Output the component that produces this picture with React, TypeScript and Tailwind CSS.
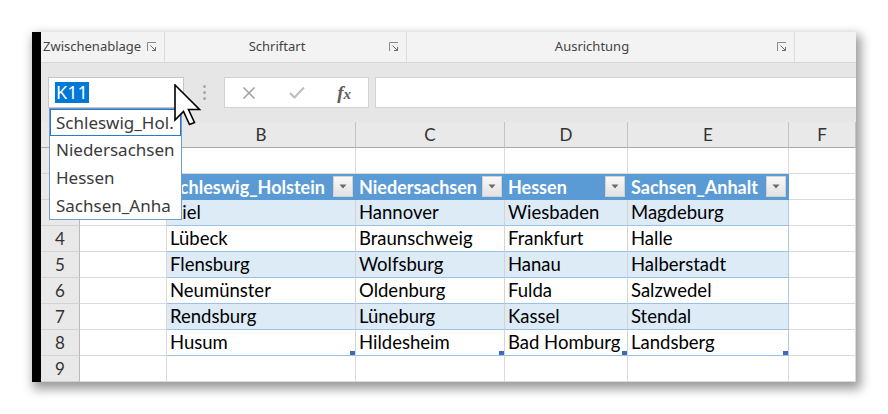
import React from "react";

const cols = ["A", "B", "C", "D", "E", "F"];

const tableHead = ["Schleswig_Holstein", "Niedersachsen", "Hessen", "Sachsen_Anhalt"];

const tableRows = [
  ["Kiel", "Hannover", "Wiesbaden", "Magdeburg"],
  ["Lübeck", "Braunschweig", "Frankfurt", "Halle"],
  ["Flensburg", "Wolfsburg", "Hanau", "Halberstadt"],
  ["Neumünster", "Oldenburg", "Fulda", "Salzwedel"],
  ["Rendsburg", "Lüneburg", "Kassel", "Stendal"],
  ["Husum", "Hildesheim", "Bad Homburg", "Landsberg"],
];

const listItems = ["Schleswig_Hol.", "Niedersachsen", "Hessen", "Sachsen_Anha"];

function Launcher() {
  return (
    <svg width="10" height="10" viewBox="0 0 10 10" className="shrink-0">
      <path d="M0.5 9 V0.5 H9" fill="none" stroke="#8a8a8a" strokeWidth="1" />
      <path d="M3.5 3.5 L8.5 8.5 M8.5 5 V8.5 H5" fill="none" stroke="#6a6a6a" strokeWidth="1" />
    </svg>
  );
}

function FilterButton() {
  return (
    <div className="absolute right-[2px] top-[2px] w-[20px] h-[21px] flex items-center justify-center bg-gradient-to-b from-[#f8f8f8] to-[#e2e2e2] border border-[#d2d2d2]">
      <svg width="8" height="5" viewBox="0 0 8 5">
        <path d="M0.5 0.5 H7.5 L4 4.5 Z" fill="#6b6b6b" />
      </svg>
    </div>
  );
}

function Cell({ row, col }: { row: number; col: number }) {
  const inTable = row >= 2 && row <= 8 && col >= 2 && col <= 5;

  if (col === 0) {
    return (
      <div className="h-[26px] flex items-center justify-center bg-[#e9e9e9] border-r border-b border-r-[#b9b9b9] border-b-[#d2d2d2] text-[17px] text-[#333]">
        {row}
      </div>
    );
  }

  if (!inTable) {
    return <div className="h-[26px] bg-white border-r border-b border-[#dadada]" />;
  }

  const idx = col - 2;

  if (row === 2) {
    return (
      <div className="relative h-[26px] flex items-center pl-[3px] bg-[#5b9bd5] border-r border-r-[#5b9bd5] text-white font-bold text-[18px] overflow-hidden whitespace-nowrap">
        {tableHead[idx]}
        <FilterButton />
      </div>
    );
  }

  const shaded = row % 2 === 1;
  const edge = col === 5;
  return (
    <div
      className={
        "relative h-[26px] flex items-center pl-[3px] border-r border-b border-b-[#9bc2e6] text-[18.5px] text-black overflow-hidden whitespace-nowrap " +
        (shaded ? "bg-[#ddebf7] " : "bg-white ") +
        (edge ? "border-r-[#b4c9e0]" : "border-r-[#d4d4d4]")
      }
    >
      {tableRows[row - 3][idx]}
      {row === 8 && <div className="absolute right-0 bottom-0 w-[5px] h-[4px] bg-[#4169b8]" />}
    </div>
  );
}

export default function App() {
  return (
    <div className="relative w-[888px] h-[414px] bg-white overflow-hidden pt-[32px] pl-[32px] font-['Lato',sans-serif]">
      {/* window */}
      <div className="flex w-[824px] h-[350px] shadow-[3px_5px_10px_2px_rgba(0,0,0,0.4)]">
        <div className="w-[9px] bg-black shrink-0" />
        <div className="flex-1 flex flex-col overflow-hidden">
          {/* ribbon group captions */}
          <div className="flex h-[31px] bg-[#f3f3f3] border-b border-[#d6d6d6] text-[13px] text-[#444] font-['Noto_Sans',sans-serif]">
            <div className="w-[124px] flex items-center border-r border-[#dcdcdc] pl-[2px] pr-[7px]">
              <span className="flex-1">Zwischenablage</span>
              <Launcher />
            </div>
            <div className="w-[242px] flex items-center border-r border-[#dcdcdc] pr-[7px]">
              <span className="flex-1 text-center">Schriftart</span>
              <Launcher />
            </div>
            <div className="w-[388px] flex items-center border-r border-[#dcdcdc] pr-[7px]">
              <span className="flex-1 text-center">Ausrichtung</span>
              <Launcher />
            </div>
            <div className="flex-1" />
          </div>

          {/* name box + formula bar */}
          <div className="flex h-[59px] pt-[14px] pl-[7px] bg-[#e6e6e6] font-['Noto_Sans',sans-serif]">
            <div className="w-[136px] h-[31px] bg-white border border-[#c6c6c6] flex items-center pl-[6px]">
              <span className="bg-[#0078d7] text-white text-[18px] leading-[21px] px-[1px]">K11</span>
            </div>
            <div className="w-[40px] h-[31px] flex flex-col items-center justify-center gap-[3px]">
              <div className="w-[3px] h-[3px] rounded-full bg-[#a8a8a8]" />
              <div className="w-[3px] h-[3px] rounded-full bg-[#a8a8a8]" />
              <div className="w-[3px] h-[3px] rounded-full bg-[#a8a8a8]" />
            </div>
            <div className="w-[145px] h-[31px] bg-white border border-[#d2d2d2] flex items-center">
              <div className="w-[48px] flex justify-center">
                <svg width="14" height="14" viewBox="0 0 14 14">
                  <path d="M1.5 1.5 L12.5 12.5 M12.5 1.5 L1.5 12.5" stroke="#a3a3a3" strokeWidth="1.6" />
                </svg>
              </div>
              <div className="w-[48px] flex justify-center">
                <svg width="16" height="13" viewBox="0 0 16 13">
                  <path d="M1 7 L5.5 11.5 L15 1.5" fill="none" stroke="#bdbdbd" strokeWidth="2" />
                </svg>
              </div>
              <div className="w-[48px] flex justify-center">
                <span className="font-['Liberation_Serif',serif] italic font-bold text-[19px] text-[#5e5e5e] leading-none">
                  f<span className="text-[15px]">x</span>
                </span>
              </div>
            </div>
            <div className="flex-1 h-[31px] ml-[6px] bg-white border-y border-l border-[#d2d2d2]" />
          </div>

          {/* sheet */}
          <div className="grid grid-cols-[39px_87px_189px_149px_123px_161px_1fr]">
            <div className="h-[26px] bg-[#e9e9e9] border-r border-b border-r-[#c4c4c4] border-b-[#a9a9a9]" />
            {cols.map((c) => (
              <div
                key={c}
                className="h-[26px] flex items-center justify-center bg-[#e9e9e9] border-r border-b border-r-[#c4c4c4] border-b-[#a9a9a9] text-[17px] text-[#333]"
              >
                {c}
              </div>
            ))}
            {[1, 2, 3, 4, 5, 6, 7, 8, 9].map((r) =>
              [0, 1, 2, 3, 4, 5, 6].map((c) => <Cell key={r + "-" + c} row={r} col={c} />)
            )}
          </div>
        </div>
      </div>

      {/* name box drop-down list */}
      <div className="absolute left-[49px] top-[108px] w-[133px] h-[112px] bg-white border border-[#6f9ccc] font-['Noto_Sans',sans-serif] text-[17px] text-[#3a3a3a]">
        {listItems.map((item, i) => (
          <div
            key={item}
            className={
              "flex items-center pl-[5px] whitespace-nowrap overflow-hidden " +
              (i === 0 ? "h-[27px] border border-[#2a79c8]" : "h-[28px] pl-[6px]")
            }
          >
            {item}
          </div>
        ))}
      </div>

      {/* mouse pointer */}
      <svg className="absolute left-[174px] top-[84px]" width="28" height="44" viewBox="0 0 28 44">
        <path
          d="M1 1 L1 36 L9.5 27.5 L15.5 40.5 L20.5 38.5 L14.5 25.5 L25.5 25.5 Z"
          fill="white"
          stroke="black"
          strokeWidth="1.6"
          strokeLinejoin="miter"
        />
      </svg>
    </div>
  );
}
